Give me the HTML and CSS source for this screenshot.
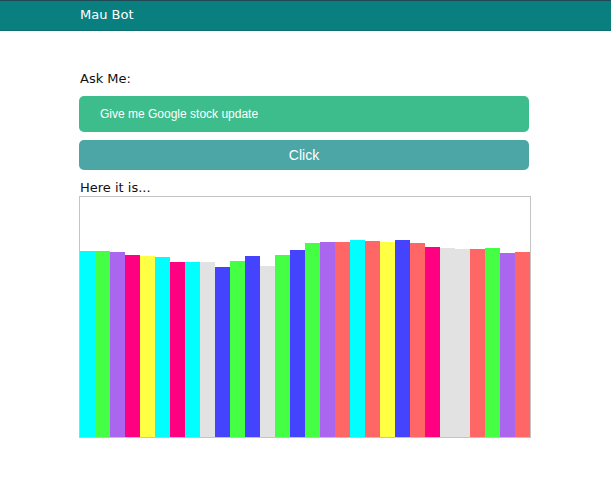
FILE: index.html
```html
<!DOCTYPE html>
<html>
<head>
<meta charset="utf-8">
<link rel="stylesheet" href="styles.css">
</head>
<body>
<header class="topbar"><div class="brand">Mau Bot</div></header>
<main class="content">
  <div class="label">Ask Me:</div>
  <div class="query">Give me Google stock update</div>
  <button class="go">Click</button>
  <div class="label result-label">Here it is...</div>
  <div class="chart">
    <div class="bar c-cyan" style="height:186px"></div>
    <div class="bar c-green" style="height:186px"></div>
    <div class="bar c-purple" style="height:185px"></div>
    <div class="bar c-pink" style="height:182px"></div>
    <div class="bar c-yellow" style="height:181px"></div>
    <div class="bar c-cyan" style="height:180px"></div>
    <div class="bar c-pink" style="height:175px"></div>
    <div class="bar c-cyan" style="height:175px"></div>
    <div class="bar c-grey" style="height:175px"></div>
    <div class="bar c-blue" style="height:170px"></div>
    <div class="bar c-green" style="height:176px"></div>
    <div class="bar c-blue" style="height:181px"></div>
    <div class="bar c-grey" style="height:171px"></div>
    <div class="bar c-green" style="height:182px"></div>
    <div class="bar c-blue" style="height:187px"></div>
    <div class="bar c-green" style="height:194px"></div>
    <div class="bar c-purple" style="height:195px"></div>
    <div class="bar c-red" style="height:195px"></div>
    <div class="bar c-cyan" style="height:197px"></div>
    <div class="bar c-red" style="height:196px"></div>
    <div class="bar c-yellow" style="height:195px"></div>
    <div class="bar c-blue" style="height:197px"></div>
    <div class="bar c-red" style="height:194px"></div>
    <div class="bar c-pink" style="height:190px"></div>
    <div class="bar c-grey" style="height:189px"></div>
    <div class="bar c-grey" style="height:188px"></div>
    <div class="bar c-red" style="height:188px"></div>
    <div class="bar c-green" style="height:189px"></div>
    <div class="bar c-purple" style="height:184px"></div>
    <div class="bar c-red" style="height:185px"></div>
  </div>
</main>
</body>
</html>
```
FILE: styles.css
```css
html, body {
  margin: 0;
  padding: 0;
  background: #ffffff;
}
body {
  font-family: "DejaVu Sans", Verdana, sans-serif;
  font-size: 13px;
  color: #111;
}
.topbar {
  height: 29px;
  background: #0a7f7f;
  border-top: 1px solid #1f4a55;
  border-bottom: 1px solid #0e6f70;
  display: flex;
  align-items: center;
}
.brand {
  margin-left: 80px;
  color: #ffffff;
  font-size: 13px;
  margin-top: -2px;
}
.content {
  width: 450px;
  margin-left: 79px;
  padding-top: 40px;
  display: flex;
  flex-direction: column;
}
.label {
  height: 16px;
  line-height: 16px;
  padding-left: 1px;
}
.query {
  margin-top: 9px;
  height: 36px;
  line-height: 36px;
  border-radius: 5px;
  background: #3dbd8b;
  color: #ffffff;
  font-family: "Liberation Sans", Arial, sans-serif;
  font-size: 12px;
  padding-left: 21px;
}
.go {
  margin-top: 8px;
  height: 30px;
  border: 0;
  border-radius: 5px;
  background: #4ca6a5;
  color: #ffffff;
  font-family: "Liberation Sans", Arial, sans-serif;
  font-size: 14px;
  padding: 0;
}
.result-label {
  margin-top: 10px;
  height: 16px;
  line-height: 15px;
}
.chart {
  width: 450px;
  height: 240px;
  border: 1px solid #c4c4c4;
  display: flex;
  align-items: flex-end;
}
.bar {
  width: 15px;
  flex: none;
}
.c-cyan { background: #00ffff; }
.c-green { background: #44ff44; }
.c-purple { background: #aa66ee; }
.c-pink { background: #ff0080; }
.c-yellow { background: #ffff44; }
.c-grey { background: #e2e2e2; }
.c-blue { background: #4444ff; }
.c-red { background: #ff6666; }
```
